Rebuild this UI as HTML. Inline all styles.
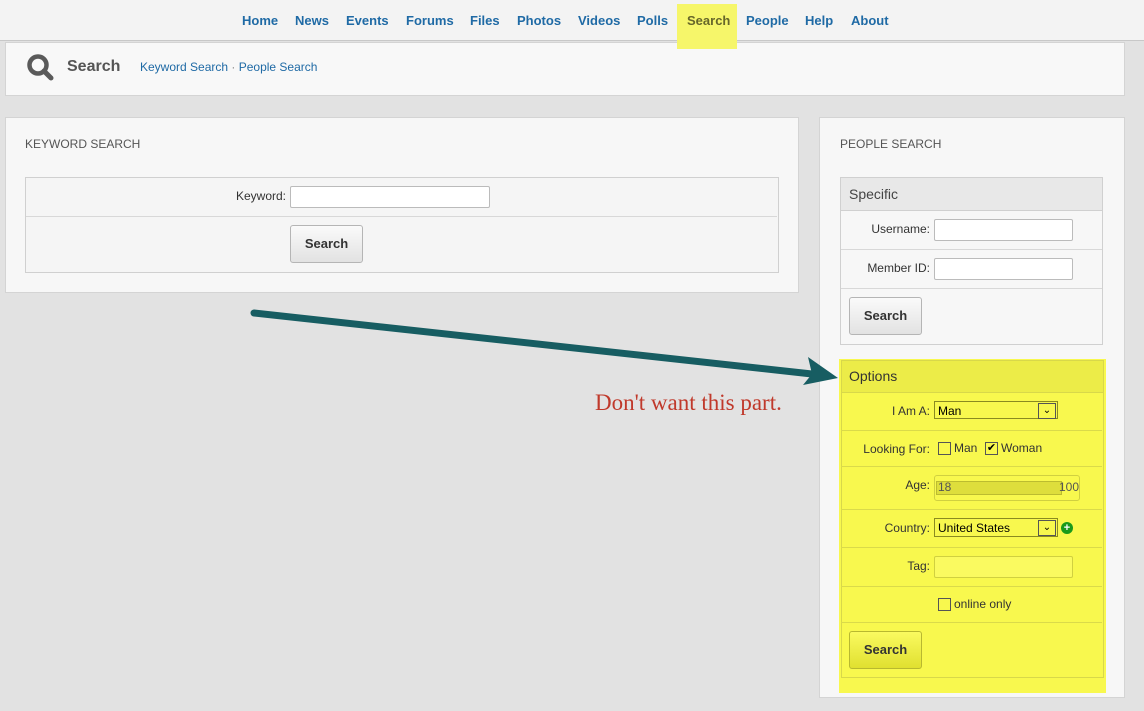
<!DOCTYPE html><html><head><style>
body{margin:0;width:1144px;height:711px;background:#e2e2e2;font-family:"Liberation Sans",sans-serif;position:relative;overflow:hidden}
.a{position:absolute}
.nav{left:0;top:0;width:1144px;height:40px;background:#f3f3f3;border-bottom:1px solid #c8c8c8}
.nav span{position:absolute;top:13px;font-size:13px;font-weight:bold;color:#1f6aa5}
.box{background:#f7f7f7;border:1px solid #d4d4d4}
.lbl{font-size:12px;color:#333;text-align:right}
.inp{background:#fff;border:1px solid #bbb;height:20px;border-radius:2px}
.btn{border:1px solid #b5b5b5;border-radius:3px;background:linear-gradient(#fafafa,#e2e2e2);font-weight:bold;font-size:13px;color:#333;text-align:center;line-height:36px;height:36px;width:71px}
.row{border-top:1px solid #d8d8d8;left:0;right:0}
</style></head><body>
<div class="a nav">
<span style="left:242px">Home</span><span style="left:295px">News</span><span style="left:346px">Events</span><span style="left:406px">Forums</span><span style="left:470px">Files</span><span style="left:517px">Photos</span><span style="left:578px">Videos</span><span style="left:637px">Polls</span>
<span style="left:746px">People</span><span style="left:805px">Help</span><span style="left:851px">About</span>
</div>
<div class="a box" style="left:5px;top:42px;width:1118px;height:52px;background:#f8f8f8"></div>
<div class="a" style="left:677px;top:4px;width:60px;height:45px;background:#f6f66a"></div>
<div class="a" style="left:687px;top:13px;font-size:13px;font-weight:bold;color:#66662a">Search</div>
<svg class="a" style="left:26px;top:53px" width="30" height="28"><circle cx="12" cy="12" r="8.5" fill="none" stroke="#5a5a5a" stroke-width="4.5"/><line x1="18" y1="18" x2="25" y2="25" stroke="#5a5a5a" stroke-width="5" stroke-linecap="round"/></svg>
<div class="a" style="left:67px;top:58px;font-size:16px;font-weight:bold;color:#555">Search</div>
<div class="a" style="left:140px;top:60px;font-size:12px;color:#1f6aa5">Keyword Search <span style="color:#888">·</span> People Search</div>

<div class="a box" style="left:5px;top:117px;width:792px;height:174px"></div>
<div class="a" style="left:25px;top:137px;font-size:12px;color:#555">KEYWORD SEARCH</div>
<div class="a" style="left:25px;top:177px;width:752px;height:94px;border:1px solid #d0d0d0;background:#f5f5f5"></div>
<div class="a row" style="left:26px;width:751px;top:216px"></div>
<div class="a lbl" style="left:200px;width:86px;top:189px">Keyword:</div>
<div class="a inp" style="left:290px;top:186px;width:198px"></div>
<div class="a btn" style="left:290px;top:225px">Search</div>

<div class="a box" style="left:819px;top:117px;width:304px;height:579px"></div>
<div class="a" style="left:840px;top:137px;font-size:12px;color:#555">PEOPLE SEARCH</div>
<div class="a" style="left:840px;top:177px;width:261px;height:166px;border:1px solid #d0d0d0;background:#f7f7f7"></div>
<div class="a" style="left:841px;top:178px;width:261px;height:32px;background:#e8e8e8;border-bottom:1px solid #d0d0d0"></div>
<div class="a" style="left:849px;top:186px;font-size:14px;color:#444">Specific</div>
<div class="a lbl" style="left:840px;width:90px;top:222px">Username:</div><div class="a inp" style="left:934px;top:219px;width:137px"></div>
<div class="a row" style="left:841px;width:261px;top:249px"></div>
<div class="a lbl" style="left:840px;width:90px;top:261px">Member ID:</div><div class="a inp" style="left:934px;top:258px;width:137px"></div>
<div class="a row" style="left:841px;width:261px;top:288px"></div>
<div class="a btn" style="left:849px;top:297px">Search</div>

<div class="a" style="left:839px;top:359px;width:267px;height:334px;background:#f8f84e"></div>
<div class="a" style="left:841px;top:360px;width:261px;height:316px;border:1px solid #d8d84a"></div>
<div class="a" style="left:842px;top:361px;width:261px;height:31px;background:#ecec48;border-bottom:1px solid #d8d84a"></div>
<div class="a" style="left:849px;top:368px;font-size:14px;color:#333">Options</div>
<div class="a lbl" style="left:840px;width:90px;top:404px">I Am A:</div>
<div class="a" style="left:934px;top:401px;height:18px;border:1px solid #8a8a20;font-size:12px;line-height:18px;padding-left:3px;box-sizing:border-box;width:124px">Man<span class="a" style="right:1px;top:1px;width:16px;height:14px;border:1px solid #555;font-size:10px;line-height:14px;text-align:center">⌄</span></div>
<div class="a row" style="left:841px;width:261px;top:430px;border-color:#dada4a"></div>
<div class="a lbl" style="left:840px;width:90px;top:442px">Looking For:</div>
<div class="a" style="left:938px;top:442px;width:11px;height:11px;border:1px solid #555"></div><div class="a" style="left:954px;top:441px;font-size:12px;color:#333">Man</div>
<div class="a" style="left:985px;top:442px;width:11px;height:11px;border:1px solid #555;font-size:11px;line-height:11px;text-align:center">✔</div><div class="a" style="left:1001px;top:441px;font-size:12px;color:#333">Woman</div>
<div class="a row" style="left:841px;width:261px;top:466px;border-color:#dada4a"></div>
<div class="a lbl" style="left:840px;width:90px;top:478px">Age:</div>
<div class="a" style="left:934px;top:475px;width:144px;height:24px;border:1px solid #d0d040;border-radius:3px"></div>
<div class="a" style="left:936px;top:481px;width:124px;height:12px;background:#dede3c;border:1px solid #bcbc30"></div>
<div class="a" style="left:938px;top:480px;font-size:12px;color:#555">18</div><div class="a" style="left:1059px;top:480px;font-size:12px;color:#555">100</div>
<div class="a row" style="left:841px;width:261px;top:509px;border-color:#dada4a"></div>
<div class="a lbl" style="left:840px;width:90px;top:521px">Country:</div>
<div class="a" style="left:934px;top:518px;height:19px;border:1px solid #8a8a20;font-size:12px;line-height:18px;padding-left:3px;box-sizing:border-box;width:124px">United States<span class="a" style="right:1px;top:1px;width:16px;height:14px;border:1px solid #555;font-size:10px;line-height:14px;text-align:center">⌄</span></div>
<div class="a" style="left:1061px;top:522px;width:12px;height:12px;border-radius:50%;background:#1a9a1a;color:#fff;font-size:11px;font-weight:bold;line-height:12px;text-align:center">+</div>
<div class="a row" style="left:841px;width:261px;top:547px;border-color:#dada4a"></div>
<div class="a lbl" style="left:840px;width:90px;top:559px">Tag:</div><div class="a inp" style="left:934px;top:556px;width:137px;background:#fafa60;border-color:#d0d040"></div>
<div class="a row" style="left:841px;width:261px;top:586px;border-color:#dada4a"></div>
<div class="a" style="left:938px;top:598px;width:11px;height:11px;border:1px solid #555"></div><div class="a" style="left:954px;top:597px;font-size:12px;color:#333">online only</div>
<div class="a row" style="left:841px;width:261px;top:622px;border-color:#dada4a"></div>
<div class="a btn" style="left:849px;top:631px;background:linear-gradient(#fafa60,#e0e030);border-color:#b8b830">Search</div>

<svg class="a" style="left:0;top:0" width="1144" height="711"><line x1="254" y1="313" x2="812" y2="374" stroke="#175d62" stroke-width="7" stroke-linecap="round"/><path d="M808,357 L838,378 L803,385 L812,374 Z" fill="#175d62"/></svg>
<div class="a" style="left:595px;top:390px;font-family:'Liberation Serif',serif;font-size:23px;color:#c0392b">Don't want this part.</div>
</body></html>
